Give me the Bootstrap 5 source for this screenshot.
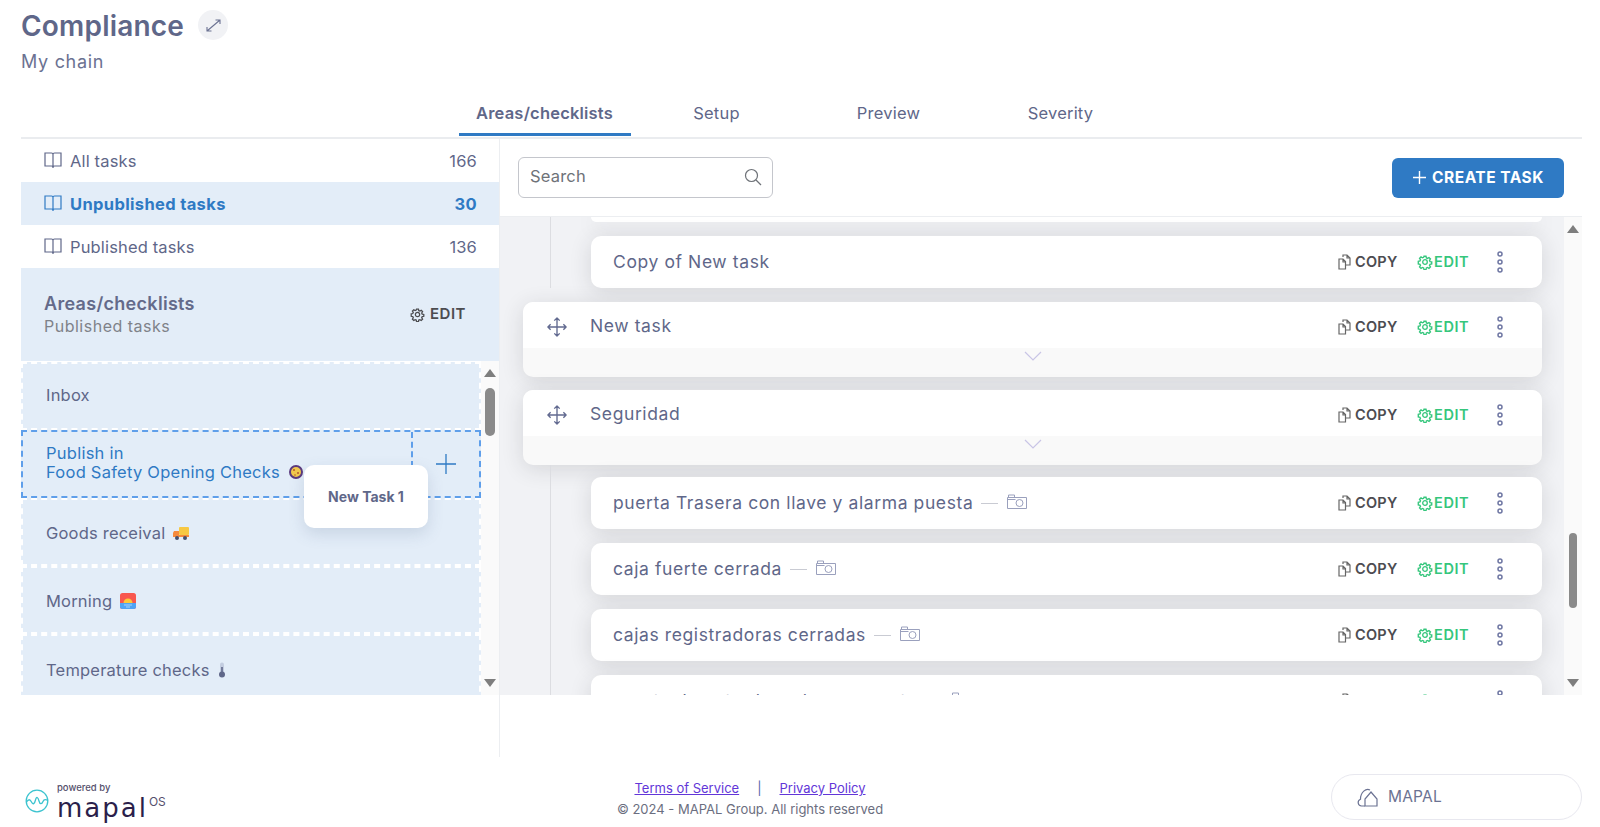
<!DOCTYPE html>
<html lang="en">
<head>
  <meta charset="UTF-8">
  <title>Compliance</title>
  <meta name="viewport" content="width=device-width, initial-scale=1">
  <link href="https://cdn.jsdelivr.net/npm/bootstrap@5.3.0/dist/css/bootstrap.min.css" rel="stylesheet">
  <style>
    body { font-family: Inter, "Liberation Sans", sans-serif; color: #5f6789; height: 827px; overflow: hidden; background: #fff; }
    .page-head { padding: 8px 21px 0; height: 95px; }
    .page-title { font-size: 28px; font-weight: 600; line-height: 36px; margin: 0; color: #5f6789; letter-spacing: .2px; }
    .expand-btn { width: 30px; height: 30px; border: 0; padding: 0; border-radius: 50%; background: #f1f2f5; margin-left: 14px; margin-top: -2px; }
    .page-sub { font-size: 18px; line-height: 24px; margin-top: 6px; color: #6b7292; letter-spacing: .7px; }
    .tabs-bar { margin: 0 18px 0 21px; padding-left: 2px; height: 44px; border-bottom: 2px solid #eaecef; }
    .tab-item { width: 172px; height: 41px; padding: 0; text-align: center; line-height: 36px; font-size: 16.5px; color: #5f6789; letter-spacing: .2px; }
    .tab-item:hover { color: #5f6789; }
    .tab-item.active { font-weight: 600; border-bottom: 3px solid #2f7ac4; }
    .main-wrap { height: 618px; }
    .left-col { margin-left: 21px; width: 479px; height: 618px; border-right: 1px solid #eceef1; }
    .left-inner { height: 556px; border-bottom: 1px solid #eceef1; }
    .count-row { height: 43px; padding: 1px 22px 0 23px; font-size: 16.5px; letter-spacing: .15px; }
    .count-row.active { background: #e3edf8; color: #2f7ac4; font-weight: 700; letter-spacing: .35px; }
    .count-row svg { margin-right: 8px; margin-top: -2px; }
    .area-head { height: 93px; background: #e3edf8; padding: 0 33px 0 23px; }
    .area-title { font-size: 18px; font-weight: 600; line-height: 23px; color: #646a8a; letter-spacing: .3px; }
    .area-sub { font-size: 16px; line-height: 22px; color: #7f8289; letter-spacing: .5px; }
    .area-edit { font-size: 15px; font-weight: 600; color: #4c4c50; gap: 5px; letter-spacing: .5px; }
    .area-body { height: 334px; overflow: hidden; }
    .area-list { width: 461px; overflow: hidden; padding-top: 1px; }
    .area-item { height: 68px; background: #e3edf8; border: 2px dashed #fff; padding-left: 23px; font-size: 16.5px; gap: 8px; letter-spacing: .2px; }
    .area-first { padding-bottom: 2px; }
    .area-low { padding-top: 2px; }
    .area-last { padding-top: 4px; }
    .area-pick { height: 68px; background: #e3edf8; border: 2px dashed #5f9fea; color: #2f7ac4; font-size: 16.5px; line-height: 19px; letter-spacing: .25px; }
    .pick-text { padding: 0 0 3px 23px; }
    .pick-add { width: 68px; border-left: 2px dashed #5f9fea; }
    .drag-card { position: absolute; left: 304px; top: 465px; width: 124px; height: 63px; background: #fff; border-radius: 10px; box-shadow: 0 6px 16px rgba(80,100,140,.18); font-size: 14px; font-weight: 700; color: #5f6789; }
    .fake-scroll { width: 18px; background: #fafafa; }
    .fake-arrow-up, .fake-arrow-down { width: 0; height: 0; border-left: 6px solid transparent; border-right: 6px solid transparent; margin: 0 auto; }
    .fake-arrow-up { border-bottom: 8px solid #7e7e7e; }
    .fake-arrow-down { border-top: 8px solid #7e7e7e; }
    .fake-thumb { background: #8a8a8a; border-radius: 6px; margin: 0 auto; }
    .left-thumb { width: 10px; height: 48px; margin-top: 11px; }
    .right-thumb { width: 8px; height: 75px; margin-top: 300px; }
    .right-col { height: 556px; border-bottom: 1px solid #eceef1; margin-right: 18px; min-width: 0; }
    .top-bar { height: 78px; padding: 0 18px 0 18px; border-bottom: 1px solid #eceef1; }
    .search-box { width: 255px; height: 41px; border: 1px solid #c4c6cc; border-radius: 6px; padding: 0 10px 2px 11px; font-size: 16.5px; color: #6e7278; }
    .search-box input { border: 0; outline: 0; width: 200px; padding: 0; font-size: 16.5px; color: #6e7278; background: none; letter-spacing: .2px; }
    .search-box input::placeholder { color: #6e7278; opacity: 1; }
    .create-btn { width: 172px; height: 40px; background: #2f7ac4; border: 0; border-radius: 6px; color: #fff; font-size: 15.5px; font-weight: 700; gap: 5px; padding: 0; letter-spacing: .5px; }
    .create-btn:hover { background: #2f7ac4; color: #fff; }
    .task-area { height: 478px; background: #f1f2f5; overflow: hidden; }
    .task-scroll { overflow: hidden; min-width: 0; }
    .task-group { margin-left: 50px; padding-left: 40px; border-left: 1px solid #dcdde1; }
    .group-lower { padding-top: 12px; }
    .task-stub { height: 5px; background: #fff; border-radius: 0 0 10px 10px; margin: 0 22px 14px 0; box-shadow: 0 4px 22px rgba(40,40,50,.14); }
    .task-row { height: 52px; background: #fff; border-radius: 10px; margin: 0 22px 14px 0; padding-left: 22px; font-size: 17.5px; letter-spacing: .6px; box-shadow: 0 4px 22px rgba(40,40,50,.14); color: #5f6789; }
    .task-row:last-child { margin-bottom: 0; }
    .task-major { margin: 0 22px 13px 23px; height: 75px; background: #f9f9f9; border-radius: 10px; box-shadow: 0 4px 22px rgba(40,40,50,.14); overflow: hidden; }
    .major-first { margin-top: 14px; }
    .major-top { height: 46px; background: #fff; padding: 3px 0 0 24px; font-size: 17.5px; letter-spacing: .6px; }
    .major-top svg.drag-icon { margin-right: 23px; }
    .major-foot { height: 29px; text-align: center; line-height: 0; padding-top: 3px; }
    .task-note { margin-left: 8px; gap: 9px; }
    .task-note svg { margin-top: -3px; }
    .note-dash { width: 17px; height: 1px; background: #c9cbd3; }
    .task-acts { margin-left: auto; height: 100%; font-size: 14.5px; padding-right: 36px; }
    .act-copy { color: #4c4c50; gap: 1px; width: 79px; font-weight: 600; letter-spacing: .25px; }
    .act-copy svg { color: #666; }
    .act-edit { color: #35c67c; gap: 1px; width: 77px; font-weight: 600; letter-spacing: .6px; }
    .act-more { width: 12px; display: block; }
    .foot-wrap { height: 70px; padding: 11px 18px 0 25px; }
    .brand-box { width: 450px; margin-top: 11px; }
    .brand-mark { margin-top: -4px; }
    .brand-small { font-size: 9.5px; line-height: 10px; color: #55506c; font-weight: 500; font-family: Inter, sans-serif; }
    .brand-name { font-family: "DejaVu Sans", sans-serif; font-size: 26px; line-height: 30px; color: #2b1f4b; letter-spacing: 2px; }
    .brand-os { font-size: 12px; line-height: 14px; color: #55506c; margin-left: 1px; margin-top: 2px; }
    .foot-mid { width: 550px; font-size: 13px; line-height: 21px; color: #6b6e80; text-align: center; margin-top: 3px; }
    .foot-mid a { color: #6236d8; }
    .foot-sep { margin: 0 18px; color: #5566aa; }
    .org-pill { width: 251px; height: 46px; border: 1px solid #e8e8ef; border-radius: 23px; margin: -2px 0 0 auto; padding-left: 25px; font-size: 15.5px; color: #6b7292; gap: 9px; letter-spacing: .2px; }
  </style>
</head>
<body>

<svg width="0" height="0" class="d-block" aria-hidden="true">
  <symbol id="ic-book" viewBox="0 0 18 17"><path d="M1 1h6.500C8.500 1 9 1.500 9 2.500 9 1.500 9.500 1 10.500 1H17v13h-6.500c-1 0-1.500.5-1.500 1.500 0-1-.5-1.500-1.500-1.500H1zM9 2.500V16" fill="none" stroke="currentColor" stroke-width="1.200"/></symbol>
  <symbol id="ic-gear" viewBox="0 0 16 16"><circle cx="8" cy="8" r="2.300" fill="none" stroke="currentColor" stroke-width="1.300"/><path d="M6.800 1.200h2.400l.4 2 1.400.6 1.700-1.100 1.700 1.700-1.100 1.700.6 1.400 2 .4v2.400l-2 .4-.6 1.400 1.100 1.700-1.700 1.700-1.700-1.100-1.400.6-.4 2H6.800l-.4-2-1.400-.6-1.700 1.100-1.700-1.700 1.100-1.700-.6-1.400-2-.4V7.200l2-.4.6-1.400-1.100-1.700 1.700-1.700 1.700 1.100 1.400-.6z" transform="translate(1.200 1.200) scale(.85)" fill="none" stroke="currentColor" stroke-width="1.600"/></symbol>
  <symbol id="ic-copy" viewBox="0 0 16 16"><path d="M1 5h4l2.500 2.500V15H1zM5 5v3h2.500M5 3V1h4l3 3v7H8M9 1v3h3" fill="none" stroke="currentColor" stroke-width="1.200"/></symbol>
  <symbol id="ic-more" viewBox="0 0 12 22"><g fill="none" stroke="#6f77a3" stroke-width="1.500"><circle cx="6" cy="3" r="2"/><circle cx="6" cy="11" r="2"/><circle cx="6" cy="19" r="2"/></g></symbol>
  <symbol id="ic-cam" viewBox="0 0 20 15"><path d="M.5 3.500h19v11H.5zM1.500 3.500V1h6v2.500M.5 5.500h8" fill="none" stroke="#9aa0bd" stroke-width="1"/><circle cx="12.500" cy="9" r="3.500" fill="none" stroke="#9aa0bd" stroke-width="1"/></symbol>
  <symbol id="ic-move" viewBox="0 0 22 22"><path d="M11 1v20M1 11h20M8 4l3-3 3 3M8 18l3 3 3-3M4 8l-3 3 3 3M18 8l3 3-3 3" fill="none" stroke="#626a90" stroke-width="1.500" stroke-linejoin="round"/></symbol>
  <symbol id="ic-chev" viewBox="0 0 18 10"><path d="M1 1l8 8 8-8" fill="none" stroke="#c9c5e6" stroke-width="1.200"/></symbol>
</svg>

<div class="page-head">
  <div class="d-flex align-items-center">
    <h1 class="page-title">Compliance</h1>
    <button class="expand-btn d-flex align-items-center justify-content-center" type="button" aria-label="Expand">
      <svg width="15" height="13" viewBox="0 0 15 13"><path d="M1 12l13-11M9.500 1H14v4M1 8v4h4.500" fill="none" stroke="#6b7292" stroke-width="1.100"/></svg>
    </button>
  </div>
  <div class="page-sub">My chain</div>
</div>

<nav class="nav justify-content-center tabs-bar">
  <a class="nav-link tab-item active" href="#">Areas/checklists</a>
  <a class="nav-link tab-item" href="#">Setup</a>
  <a class="nav-link tab-item" href="#">Preview</a>
  <a class="nav-link tab-item" href="#">Severity</a>
</nav>

<div class="d-flex main-wrap">
  <!-- Left column -->
  <div class="left-col flex-shrink-0">
    <div class="left-inner">
      <div class="count-row d-flex align-items-center">
        <svg width="18" height="17"><use href="#ic-book"/></svg><span>All tasks</span><span class="ms-auto">166</span>
      </div>
      <div class="count-row active d-flex align-items-center">
        <svg width="18" height="17"><use href="#ic-book"/></svg><span>Unpublished tasks</span><span class="ms-auto">30</span>
      </div>
      <div class="count-row d-flex align-items-center">
        <svg width="18" height="17"><use href="#ic-book"/></svg><span>Published tasks</span><span class="ms-auto">136</span>
      </div>
      <div class="area-head d-flex align-items-center justify-content-between">
        <div>
          <div class="area-title">Areas/checklists</div>
          <div class="area-sub">Published tasks</div>
        </div>
        <div class="area-edit d-flex align-items-center">
          <svg width="15" height="15"><use href="#ic-gear"/></svg>EDIT
        </div>
      </div>
      <div class="area-body d-flex">
        <div class="area-list">
          <div class="area-item area-first d-flex align-items-center">Inbox</div>
          <div class="area-pick d-flex">
            <div class="pick-text flex-grow-1 d-flex flex-column justify-content-center">
              <div>Publish in</div>
              <div class="d-flex align-items-center">Food Safety Opening Checks
                <svg class="ms-2" width="16" height="16" viewBox="0 0 16 16"><circle cx="8" cy="8" r="6" fill="#f2c94c" stroke="#5b3a7e" stroke-width="2"/><circle cx="6" cy="6" r="1" fill="#b4572f"/><circle cx="10" cy="9" r="1" fill="#b4572f"/><circle cx="7" cy="11" r=".8" fill="#b4572f"/></svg>
              </div>
            </div>
            <div class="pick-add d-flex align-items-center justify-content-center">
              <svg width="22" height="22" viewBox="0 0 22 22"><path d="M11 1v20M1 11h20" stroke="#2f7ac4" stroke-width="1.300"/></svg>
            </div>
          </div>
          <div class="area-item area-low d-flex align-items-center">Goods receival
            <svg width="17" height="14" viewBox="0 0 17 14"><rect x="6" y="1" width="10" height="8" rx="1" fill="#f7c843"/><path d="M1 5h5v6H0V7z" fill="#f58a3c"/><rect y="9" width="16" height="2" fill="#f58a3c"/><circle cx="4" cy="12" r="2" fill="#44506e"/><circle cx="12" cy="12" r="2" fill="#44506e"/></svg>
          </div>
          <div class="area-item area-low d-flex align-items-center">Morning
            <svg width="16" height="16" viewBox="0 0 16 16"><rect width="16" height="16" rx="2.500" fill="#f8574f"/><path d="M0 10h16v3.500a2.500 2.500 0 0 1-2.500 2.500h-11A2.500 2.500 0 0 1 0 13.500z" fill="#4ea4f5"/><path d="M3.500 10a4.500 4.500 0 0 1 9 0z" fill="#fcc83a"/><path d="M4 12h8M6 14h4" stroke="#bfe0fb" stroke-width=".8"/></svg>
          </div>
          <div class="area-item area-last d-flex align-items-center">Temperature checks
            <svg width="8" height="16" viewBox="0 0 8 16"><rect x="2" y=".5" width="4" height="11" rx="2" fill="#c3cde0"/><rect x="3.200" y="5" width="1.600" height="7" fill="#5f6789"/><circle cx="4" cy="12.500" r="3" fill="#5f6789"/></svg>
          </div>
        </div>
        <div class="fake-scroll d-flex flex-column">
          <div class="fake-arrow-up mt-2"></div>
          <div class="fake-thumb left-thumb"></div>
          <div class="fake-arrow-down mt-auto mb-2"></div>
        </div>
      </div>
    </div>
  </div>

  <!-- Right column -->
  <div class="right-col flex-grow-1">
    <div class="top-bar d-flex align-items-center justify-content-between">
      <div class="search-box d-flex align-items-center justify-content-between">
        <input type="text" placeholder="Search" aria-label="Search">
        <svg width="18" height="18" viewBox="0 0 18 18"><circle cx="7.500" cy="7.500" r="6" fill="none" stroke="#6e7278" stroke-width="1.200"/><path d="M12 12l5 5" stroke="#6e7278" stroke-width="1.200"/></svg>
      </div>
      <button class="btn create-btn d-flex align-items-center justify-content-center" type="button">
        <svg width="15" height="15" viewBox="0 0 15 15"><path d="M7.500 1v13M1 7.500h13" stroke="#fff" stroke-width="1.400"/></svg>CREATE TASK
      </button>
    </div>
    <div class="task-area d-flex">
      <div class="task-scroll flex-grow-1">
        <div class="task-group">
          <div class="task-stub"></div>
          <div class="task-row d-flex align-items-center">Copy of New task
            <div class="task-acts d-flex align-items-center">
              <div class="act-copy d-flex align-items-center"><svg width="16" height="16"><use href="#ic-copy"/></svg>COPY</div>
              <div class="act-edit d-flex align-items-center"><svg width="16" height="16"><use href="#ic-gear"/></svg>EDIT</div>
              <svg class="act-more" height="22"><use href="#ic-more"/></svg>
            </div>
          </div>
        </div>
        <div class="task-major major-first">
          <div class="major-top d-flex align-items-center">
            <svg class="drag-icon" width="20" height="20"><use href="#ic-move"/></svg>New task
            <div class="task-acts d-flex align-items-center">
              <div class="act-copy d-flex align-items-center"><svg width="16" height="16"><use href="#ic-copy"/></svg>COPY</div>
              <div class="act-edit d-flex align-items-center"><svg width="16" height="16"><use href="#ic-gear"/></svg>EDIT</div>
              <svg class="act-more" height="22"><use href="#ic-more"/></svg>
            </div>
          </div>
          <div class="major-foot"><svg width="18" height="10"><use href="#ic-chev"/></svg></div>
        </div>
        <div class="task-major mb-0">
          <div class="major-top d-flex align-items-center">
            <svg class="drag-icon" width="20" height="20"><use href="#ic-move"/></svg>Seguridad
            <div class="task-acts d-flex align-items-center">
              <div class="act-copy d-flex align-items-center"><svg width="16" height="16"><use href="#ic-copy"/></svg>COPY</div>
              <div class="act-edit d-flex align-items-center"><svg width="16" height="16"><use href="#ic-gear"/></svg>EDIT</div>
              <svg class="act-more" height="22"><use href="#ic-more"/></svg>
            </div>
          </div>
          <div class="major-foot"><svg width="18" height="10"><use href="#ic-chev"/></svg></div>
        </div>
        <div class="task-group group-lower">
          <div class="task-row d-flex align-items-center">puerta Trasera con llave y alarma puesta
            <span class="task-note d-flex align-items-center"><span class="note-dash"></span><svg width="20" height="15"><use href="#ic-cam"/></svg></span>
            <div class="task-acts d-flex align-items-center">
              <div class="act-copy d-flex align-items-center"><svg width="16" height="16"><use href="#ic-copy"/></svg>COPY</div>
              <div class="act-edit d-flex align-items-center"><svg width="16" height="16"><use href="#ic-gear"/></svg>EDIT</div>
              <svg class="act-more" height="22"><use href="#ic-more"/></svg>
            </div>
          </div>
          <div class="task-row d-flex align-items-center">caja fuerte cerrada
            <span class="task-note d-flex align-items-center"><span class="note-dash"></span><svg width="20" height="15"><use href="#ic-cam"/></svg></span>
            <div class="task-acts d-flex align-items-center">
              <div class="act-copy d-flex align-items-center"><svg width="16" height="16"><use href="#ic-copy"/></svg>COPY</div>
              <div class="act-edit d-flex align-items-center"><svg width="16" height="16"><use href="#ic-gear"/></svg>EDIT</div>
              <svg class="act-more" height="22"><use href="#ic-more"/></svg>
            </div>
          </div>
          <div class="task-row d-flex align-items-center">cajas registradoras cerradas
            <span class="task-note d-flex align-items-center"><span class="note-dash"></span><svg width="20" height="15"><use href="#ic-cam"/></svg></span>
            <div class="task-acts d-flex align-items-center">
              <div class="act-copy d-flex align-items-center"><svg width="16" height="16"><use href="#ic-copy"/></svg>COPY</div>
              <div class="act-edit d-flex align-items-center"><svg width="16" height="16"><use href="#ic-gear"/></svg>EDIT</div>
              <svg class="act-more" height="22"><use href="#ic-more"/></svg>
            </div>
          </div>
          <div class="task-row d-flex align-items-center">puerta de entrada y alarma puesta
            <span class="task-note d-flex align-items-center"><span class="note-dash"></span><svg width="20" height="15"><use href="#ic-cam"/></svg></span>
            <div class="task-acts d-flex align-items-center">
              <div class="act-copy d-flex align-items-center"><svg width="16" height="16"><use href="#ic-copy"/></svg>COPY</div>
              <div class="act-edit d-flex align-items-center"><svg width="16" height="16"><use href="#ic-gear"/></svg>EDIT</div>
              <svg class="act-more" height="22"><use href="#ic-more"/></svg>
            </div>
          </div>
        </div>
      </div>
      <div class="fake-scroll d-flex flex-column flex-shrink-0">
        <div class="fake-arrow-up mt-2"></div>
        <div class="fake-thumb right-thumb"></div>
        <div class="fake-arrow-down mt-auto mb-2"></div>
      </div>
    </div>
  </div>
</div>

<div class="drag-card d-flex align-items-center justify-content-center">New Task 1</div>

<footer class="foot-wrap d-flex align-items-center">
  <div class="brand-box d-flex align-items-center flex-shrink-0">
    <svg width="24" height="24" viewBox="0 0 24 24" class="brand-mark me-2"><circle cx="12" cy="12" r="10.800" fill="none" stroke="#3cc3cf" stroke-width="1.300"/><path d="M1.500 13c2-3 3.500-3 5 0s3 2 4-2 2.500-3 3.500 1 3 3 4 .5 3-2 5-1" fill="none" stroke="#3cc3cf" stroke-width="1.300"/></svg>
    <div>
      <div class="brand-small">powered by</div>
      <div class="d-flex"><span class="brand-name">mapal</span><span class="brand-os">OS</span></div>
    </div>
  </div>
  <div class="foot-mid">
    <div><a href="#">Terms of Service</a><span class="foot-sep">|</span><a href="#">Privacy Policy</a></div>
    <div>© 2024 - MAPAL Group. All rights reserved</div>
  </div>
  <div class="org-pill d-flex align-items-center">
    <svg width="22" height="20" viewBox="0 0 22 20"><path d="M8 19H4.500a3.500 3.500 0 0 1-1-6.800C3.500 5 9 1 13 3" fill="none" stroke="#6b7292" stroke-width="1.200"/><path d="M8 19v-7l6-7 6 7v7z" fill="none" stroke="#6b7292" stroke-width="1.200"/></svg>
    MAPAL
  </div>
</footer>

</body>
</html>
